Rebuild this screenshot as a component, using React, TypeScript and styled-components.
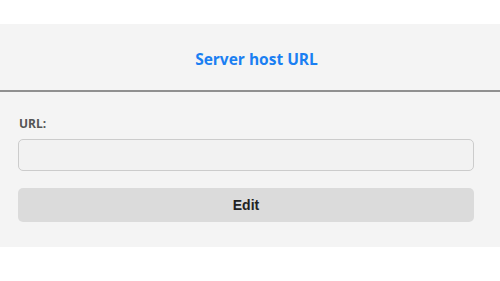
import styled, { createGlobalStyle } from 'styled-components';

const GlobalStyle = createGlobalStyle`
  html, body {
    margin: 0;
    padding: 0;
    background: #ffffff;
    font-family: "Open Sans", "Noto Sans", sans-serif;
  }
`;

const Page = styled.div`
  padding-top: 24px;
  width: 500px;
  height: 281px;
  box-sizing: border-box;
`;

const Panel = styled.section`
  background: #f4f4f4;
  height: 223px;
`;

const Header = styled.header`
  display: flex;
  align-items: center;
  justify-content: center;
  height: 68px;
  padding: 4px 0 0 13px;
  border-bottom: 2px solid #909090;
  box-sizing: border-box;
`;

const Title = styled.h2`
  margin: 0;
  font-size: 15.5px;
  font-weight: 700;
  color: #1a7ff2;
`;

const Body = styled.div`
  display: flex;
  flex-direction: column;
  padding: 24px 26px 0 18px;
`;

const Label = styled.label`
  font-size: 12px;
  font-weight: 700;
  color: #555555;
  margin-left: 1px;
  line-height: 16px;
`;

const Input = styled.input`
  margin-top: 7px;
  height: 32px;
  box-sizing: border-box;
  border: 1px solid #cccccc;
  border-radius: 5px;
  background: #f2f2f2;
  outline: none;
  padding: 0 8px;
  width: 456px;
`;

const Button = styled.button`
  margin-top: 17px;
  height: 34px;
  width: 456px;
  border: 0;
  border-radius: 5px;
  background: #dbdbdb;
  color: #222222;
  font-family: "Liberation Sans", Arial, sans-serif;
  font-size: 14px;
  font-weight: 700;
  cursor: pointer;
`;

export default function App() {
  return (
    <Page>
      <GlobalStyle />
      <Panel>
        <Header>
          <Title>Server host URL</Title>
        </Header>
        <Body>
          <Label htmlFor="url">URL:</Label>
          <Input id="url" type="text" />
          <Button>Edit</Button>
        </Body>
      </Panel>
    </Page>
  );
}
